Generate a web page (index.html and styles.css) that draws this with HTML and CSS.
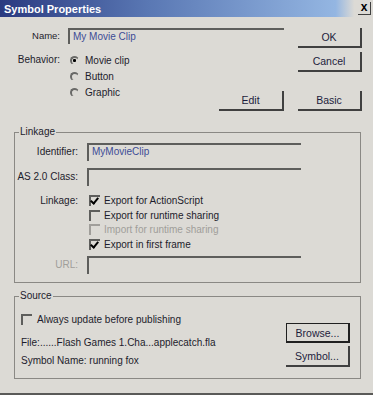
FILE: index.html
```html
<!DOCTYPE html>
<html lang="en">
<head>
  <meta charset="UTF-8" />
  <title>Symbol Properties</title>
  <link rel="stylesheet" href="styles.css">
</head>
<body>
<div class="window">

  <div class="titlebar">
    <span class="title">Symbol Properties</span>
    <span class="close">x</span>
  </div>

  <!-- top part: name, behavior and the main buttons -->
  <div class="top">
    <label class="lbl small" for="name">Name:</label>
    <div class="field"><div class="input" id="name">My Movie Clip</div></div>
    <div class="col-btn"><button class="btn">OK</button></div>

    <div class="lbl">Behavior:</div>
    <div class="behavior">
      <div class="radios">
        <div class="radio-row"><span class="radio on"></span>Movie clip</div>
        <div class="radio-row"><span class="radio"></span>Button</div>
        <div class="radio-row"><span class="radio"></span>Graphic</div>
      </div>
      <button class="btn">Edit</button>
    </div>
    <div class="col-btn stack">
      <button class="btn">Cancel</button>
      <button class="btn">Basic</button>
    </div>
  </div>

  <fieldset class="group linkage">
    <legend>Linkage</legend>
    <div class="form">
      <div class="lbl">Identifier:</div>
      <div class="input">MyMovieClip</div>

      <div class="lbl">AS 2.0 Class:</div>
      <div class="input"></div>

      <div class="lbl lbl-top">Linkage:</div>
      <div class="checks">
        <div class="check-row"><span class="check on"></span>Export for ActionScript</div>
        <div class="check-row"><span class="check"></span>Export for runtime sharing</div>
        <div class="check-row off"><span class="check"></span>Import for runtime sharing</div>
        <div class="check-row"><span class="check on"></span>Export in first frame</div>
      </div>

      <div class="lbl off url">URL:</div>
      <div class="input url"></div>
    </div>
  </fieldset>

  <fieldset class="group source">
    <legend>Source</legend>
    <div class="source-body">
      <div class="source-info">
        <div class="check-row"><span class="check"></span>Always update before publishing</div>
        <div class="line">File:......Flash Games 1.Cha...applecatch.fla</div>
        <div class="line">Symbol Name: running fox</div>
      </div>
      <div class="source-btns">
        <button class="btn btn-default">Browse...</button>
        <button class="btn btn-tall">Symbol...</button>
      </div>
    </div>
  </fieldset>

</div>
</body>
</html>
```

FILE: styles.css
```css
body {
  margin: 0;
  background: #dcdad5;
  font-family: 'Liberation Sans', Arial, sans-serif;
  font-size: 10px;
  color: #1c1c2c;
}
.window {
  width: 373px;
  height: 395px;
  box-sizing: border-box;
  border-bottom: 2px solid #5a5a58;
  overflow: hidden;
}
.titlebar {
  height: 17px;
  display: flex;
  align-items: center;
  justify-content: space-between;
  background: linear-gradient(to right, #2a3a80, #5a78b4 40%, #94b6e2 90%, #dcdad5 95%);
}
.title {
  color: #fff;
  font-weight: bold;
  font-size: 11px;
  padding-left: 4px;
}
.close {
  width: 13px;
  height: 13px;
  margin-right: 2px;
  box-sizing: border-box;
  background: #dcdad5;
  border-right: 1px solid #404040;
  border-bottom: 1px solid #404040;
  font-weight: bold;
  font-size: 12px;
  line-height: 10px;
  text-align: center;
  color: #000;
}

/* top block */
.top {
  display: grid;
  grid-template-columns: 60px 216px 64px;
  column-gap: 8px;
  row-gap: 4px;
  padding-top: 11px;
}
.top .col-btn {
  margin-left: 6px;
}
.lbl {
  text-align: right;
  line-height: 16px;
  white-space: nowrap;
}
.lbl.small {
  font-size: 9.5px;
}
.input {
  height: 16px;
  box-sizing: border-box;
  border-top: 2px solid #5e5e5c;
  border-left: 2px solid #5e5e5c;
  padding-left: 3px;
  line-height: 14px;
  color: #3c4c96;
}
.btn {
  display: block;
  width: 64px;
  height: 20px;
  background: #dcdad5;
  border: none;
  border-right: 2px solid #404040;
  border-bottom: 2px solid #404040;
  font-family: inherit;
  font-size: 10.5px;
  color: #1c1c3c;
  padding: 0;
}
.btn-default {
  border: 1px solid #202020;
  border-right-width: 2px;
  border-bottom-width: 2px;
}
.behavior {
  display: flex;
  justify-content: space-between;
  height: 59px;
}
.behavior .btn {
  align-self: flex-end;
  width: 65px;
}
.stack {
  display: flex;
  flex-direction: column;
  justify-content: space-between;
}
.radios {
  padding-left: 2px;
}
.radio-row {
  display: flex;
  align-items: center;
  height: 16px;
}
.radio {
  position: relative;
  width: 9px;
  height: 9px;
  margin-right: 6px;
  border-radius: 50%;
  border-top: 2px solid #6a6a68;
  border-left: 2px solid #6a6a68;
  border-right: 1px solid transparent;
  border-bottom: 1px solid transparent;
  box-sizing: border-box;
}
.radio.on::after {
  content: "";
  position: absolute;
  left: 1px;
  top: 1px;
  width: 3px;
  height: 3px;
  border-radius: 1px;
  background: #000;
}

/* group boxes */
.group {
  margin: 15px 12px 0 14px;
  padding: 0;
  border: 1px solid #8a8884;
  height: 157px;
  box-sizing: border-box;
}
.group legend {
  padding: 0 1px;
  margin-left: 4px;
  line-height: 12px;
}
.form {
  display: grid;
  grid-template-columns: 63px 214px;
  column-gap: 9px;
  row-gap: 7px;
  padding-top: 5px;
}
.form .input {
  height: 18px;
}
.form .lbl {
  line-height: 18px;
}
.form .lbl-top {
  line-height: 15px;
}
.form .url {
  margin-top: -3px;
}
.off {
  color: #a09e9a;
}
.checks {
  padding-left: 2px;
}
.check-row {
  display: flex;
  align-items: center;
  height: 14.7px;
}
.check {
  position: relative;
  width: 11px;
  height: 11px;
  box-sizing: border-box;
  margin-right: 4px;
  border-top: 2px solid #5e5e5c;
  border-left: 2px solid #5e5e5c;
}
.off .check {
  border-color: #a09e9a;
}
.check.on::after {
  content: "";
  position: absolute;
  left: 1px;
  top: -1px;
  width: 3px;
  height: 6px;
  border-right: 2px solid #000;
  border-bottom: 2px solid #000;
  transform: rotate(40deg);
}

.source {
  margin-top: 7px;
  height: 89px;
}
.source-body {
  display: flex;
  justify-content: space-between;
  padding: 10px 10px 0 6px;
}
.source-info .check-row {
  margin-bottom: 7px;
}
.source-info .check {
  margin-right: 5px;
}
.line {
  line-height: 18px;
}
.source-btns {
  display: flex;
  flex-direction: column;
  gap: 3px;
  padding-top: 11px;
}
.source-btns .btn-tall {
  height: 21px;
}
```
